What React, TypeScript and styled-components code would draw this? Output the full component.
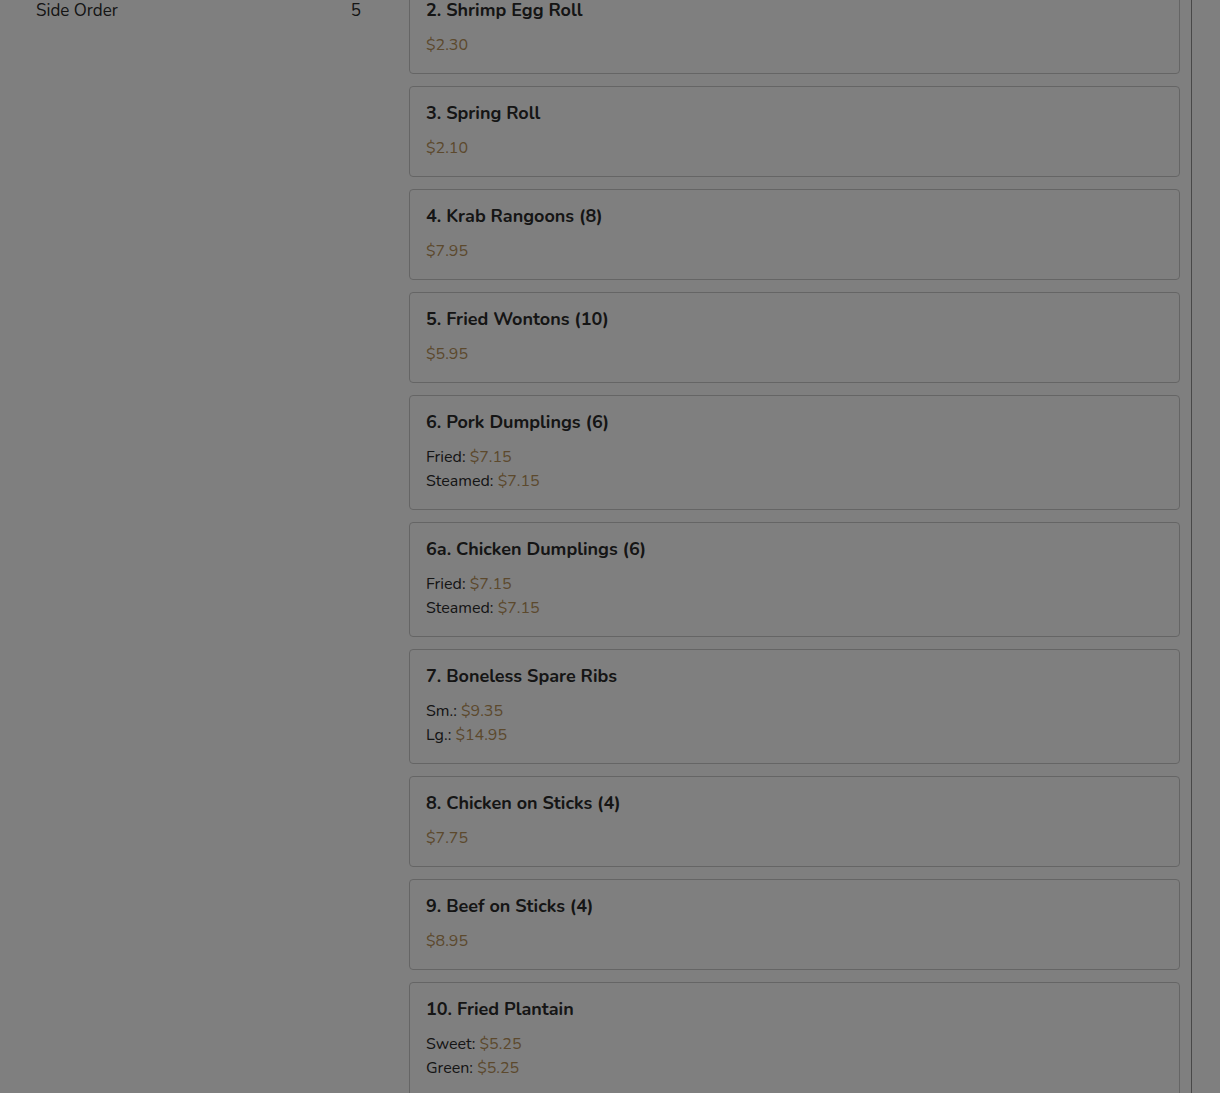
import styled, { createGlobalStyle } from 'styled-components';

const GlobalStyle = createGlobalStyle`
  html, body {
    margin: 0;
    padding: 0;
    overflow: hidden;
    background: #ffffff;
    font-family: Nunito, Lato, 'Noto Sans', sans-serif;
    color: #2a2a2a;
  }
`;

interface PriceLine {
  label?: string;
  price: string;
}

interface MenuItem {
  name: string;
  prices: PriceLine[];
}

const items: MenuItem[] = [
  { name: '2. Shrimp Egg Roll', prices: [{ price: '$2.30' }] },
  { name: '3. Spring Roll', prices: [{ price: '$2.10' }] },
  { name: '4. Krab Rangoons (8)', prices: [{ price: '$7.95' }] },
  { name: '5. Fried Wontons (10)', prices: [{ price: '$5.95' }] },
  {
    name: '6. Pork Dumplings (6)',
    prices: [
      { label: 'Fried', price: '$7.15' },
      { label: 'Steamed', price: '$7.15' },
    ],
  },
  {
    name: '6a. Chicken Dumplings (6)',
    prices: [
      { label: 'Fried', price: '$7.15' },
      { label: 'Steamed', price: '$7.15' },
    ],
  },
  {
    name: '7. Boneless Spare Ribs',
    prices: [
      { label: 'Sm.', price: '$9.35' },
      { label: 'Lg.', price: '$14.95' },
    ],
  },
  { name: '8. Chicken on Sticks (4)', prices: [{ price: '$7.75' }] },
  { name: '9. Beef on Sticks (4)', prices: [{ price: '$8.95' }] },
  {
    name: '10. Fried Plantain',
    prices: [
      { label: 'Sweet', price: '$5.25' },
      { label: 'Green', price: '$5.25' },
    ],
  },
  { name: '11. French Fries', prices: [{ price: '$3.95' }] },
];

const Page = styled.div`
  display: grid;
  grid-template-columns: 325px 1fr;
  column-gap: 48px;
  padding: 0 28px 0 36px;
  margin-top: -17px;
`;

const Sidebar = styled.aside`
  display: flex;
  flex-direction: column;
`;

const CategoryRow = styled.div`
  display: flex;
  justify-content: space-between;
  align-items: center;
  font-size: 17px;
  line-height: 20px;
  margin-top: 18px;
  color: #2a2a2a;
`;

const Main = styled.main`
  display: flex;
  flex-direction: column;
  gap: 12px;
  padding-right: 11px;
  border-right: 1px solid #909090;
  min-height: 1200px;
`;

const Card = styled.div`
  border: 1px solid #cacaca;
  border-radius: 4px;
  padding: 15px 16px 16px;
  background: #ffffff;
`;

const Title = styled.h3`
  margin: 0 0 12px;
  font-size: 18px;
  line-height: 22px;
  font-weight: 700;
  color: #2a2a2a;
`;

const Line = styled.div`
  font-size: 16px;
  line-height: 24px;
  color: #2a2a2a;
`;

const Price = styled.span`
  color: #b8925a;
`;

const Overlay = styled.div`
  position: fixed;
  inset: 0;
  background: rgba(0, 0, 0, 0.5);
`;

export default function App() {
  return (
    <>
      <GlobalStyle />
      <Page>
        <Sidebar>
          <CategoryRow>
            <span>Side Order</span>
            <span>5</span>
          </CategoryRow>
        </Sidebar>
        <Main>
          {items.map((item) => (
            <Card key={item.name}>
              <Title>{item.name}</Title>
              {item.prices.map((p, i) => (
                <Line key={i}>
                  {p.label ? `${p.label}: ` : ''}
                  <Price>{p.price}</Price>
                </Line>
              ))}
            </Card>
          ))}
        </Main>
      </Page>
      <Overlay />
    </>
  );
}
